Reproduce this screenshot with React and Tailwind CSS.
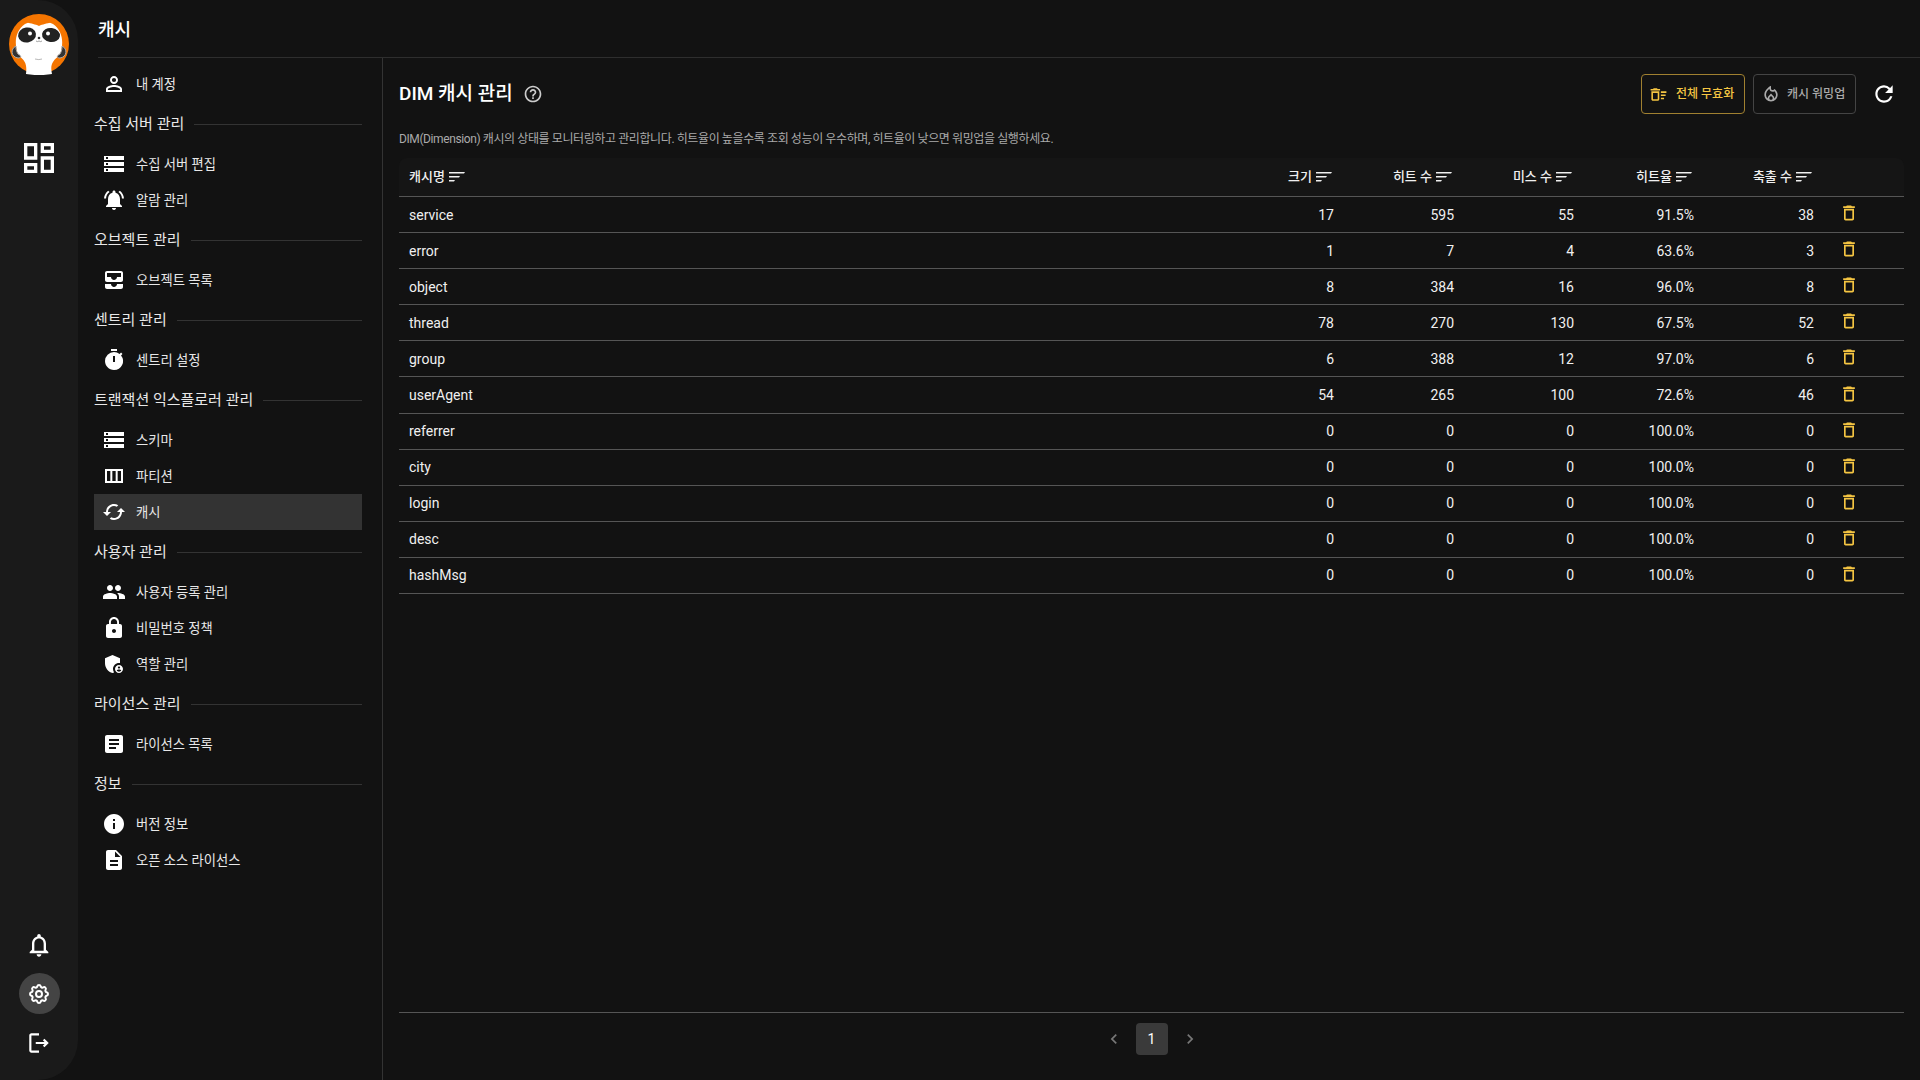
import React from 'react'
import {
  MdPersonOutline, MdStorage, MdNotificationsActive, MdAllInbox, MdTimer, MdOutlineViewColumn, MdCached,
  MdPeople, MdLock, MdAdminPanelSettings, MdArticle, MdInfo, MdDescription, MdOutlineDashboard,
  MdOutlineNotifications, MdOutlineLogout, MdRefresh, MdOutlineDelete, MdOutlineDeleteSweep,
  MdOutlineLocalFireDepartment, MdHelpOutline, MdChevronLeft, MdChevronRight,
} from 'react-icons/md'
import { TbSettings } from 'react-icons/tb'

const NAV = [
  { items: [{ icon: MdPersonOutline, label: '내 계정' }] },
  { title: '수집 서버 관리', items: [{ icon: MdStorage, label: '수집 서버 편집' }, { icon: MdNotificationsActive, label: '알람 관리' }] },
  { title: '오브젝트 관리', items: [{ icon: MdAllInbox, label: '오브젝트 목록' }] },
  { title: '센트리 관리', items: [{ icon: MdTimer, label: '센트리 설정' }] },
  {
    title: '트랜잭션 익스플로러 관리',
    items: [
      { icon: MdStorage, label: '스키마' },
      { icon: MdOutlineViewColumn, label: '파티션' },
      { icon: MdCached, label: '캐시', active: true },
    ],
  },
  {
    title: '사용자 관리',
    items: [
      { icon: MdPeople, label: '사용자 등록 관리' },
      { icon: MdLock, label: '비밀번호 정책' },
      { icon: MdAdminPanelSettings, label: '역할 관리' },
    ],
  },
  { title: '라이선스 관리', items: [{ icon: MdArticle, label: '라이선스 목록' }] },
  { title: '정보', items: [{ icon: MdInfo, label: '버전 정보' }, { icon: MdDescription, label: '오픈 소스 라이선스' }] },
]

const COLUMNS = ['크기', '히트 수', '미스 수', '히트율', '축출 수']

const ROWS = [
  ['service', '17', '595', '55', '91.5%', '38'],
  ['error', '1', '7', '4', '63.6%', '3'],
  ['object', '8', '384', '16', '96.0%', '8'],
  ['thread', '78', '270', '130', '67.5%', '52'],
  ['group', '6', '388', '12', '97.0%', '6'],
  ['userAgent', '54', '265', '100', '72.6%', '46'],
  ['referrer', '0', '0', '0', '100.0%', '0'],
  ['city', '0', '0', '0', '100.0%', '0'],
  ['login', '0', '0', '0', '100.0%', '0'],
  ['desc', '0', '0', '0', '100.0%', '0'],
  ['hashMsg', '0', '0', '0', '100.0%', '0'],
]

const SortIcon = () => (
  <svg width="16" height="12" viewBox="0 0 16 12" className="shrink-0 ml-1" fill="#f0f0f0">
    <path d="M0 1h16l-1 1.5H0z" />
    <path d="M0 5h11l-1 1.5H0z" />
    <path d="M0 9h6l-1 1.5H0z" />
  </svg>
)

// panda mascot, roughly traced from the reference
const Logo = () => (
  <svg width="62" height="62" viewBox="0 0 62 62">
    <circle cx="31" cy="31" r="30" fill="#f57500" />
    <path d="M18 61 C19 52 18 48 10 42 C6 30 7 18 17 11 C24 7 38 7 45 11 C55 18 56 30 52 42 C44 48 42 52 44 61 C36 62.5 26 62.5 18 61Z" fill="#ffffff" />
    <path d="M18 9 C24 5 38 5 44 9 C38 11 35 11 31 13 C27 11 24 11 18 9Z" fill="#f57500" />
    <ellipse cx="19" cy="22" rx="9" ry="7.5" fill="#222222" transform="rotate(-8 19 22)" />
    <ellipse cx="43" cy="22" rx="9" ry="7" fill="#222222" transform="rotate(8 43 22)" />
    <circle cx="22" cy="20.5" r="2" fill="#ffffff" />
    <circle cx="40" cy="20.5" r="2" fill="#ffffff" />
    <circle cx="31" cy="25" r="1.3" fill="#333333" />
    <path d="M28 28 q1.5 1.2 3 0 q1.5 1.2 3 0" stroke="#777777" strokeWidth="0.7" fill="none" />
    <path d="M27 46 q4 1.2 7 0" stroke="#999999" strokeWidth="0.7" fill="none" />
    <path d="M8 33 C2 36 3 44 10 45 C13 45 14 43 10 41 C8 38 8 35 8 33Z" fill="#333333" stroke="#aaaaaa" strokeWidth="1" />
    <path d="M54 33 C60 36 59 44 52 45 C49 45 48 43 52 41 C54 38 54 35 54 33Z" fill="#333333" stroke="#aaaaaa" strokeWidth="1" />
  </svg>
)

const Rail = () => (
  <aside className="w-[78px] h-full shrink-0 flex flex-col items-center bg-[#1a1a1a] rounded-r-[40px]">
    <div className="mt-[13px]">
      <Logo />
    </div>
    <MdOutlineDashboard size={40} className="mt-[63px] text-white" />
    <div className="mt-auto mb-[17px] flex flex-col items-center gap-[8px]">
      <div className="w-[41px] h-[41px] flex items-center justify-center">
        <MdOutlineNotifications size={28} className="text-white" />
      </div>
      <div className="w-[41px] h-[41px] flex items-center justify-center rounded-full bg-[#444444]">
        <TbSettings size={24} className="text-white" />
      </div>
      <div className="w-[41px] h-[41px] flex items-center justify-center">
        <MdOutlineLogout size={26} className="text-white" />
      </div>
    </div>
  </aside>
)

const Sidebar = () => (
  <nav className="w-[305px] shrink-0 border-r border-[#333333] pt-2 pl-4 pr-5">
    {NAV.map((group, i) => (
      <div key={i}>
        {group.title && (
          <div className="h-11 flex items-center gap-[10px]">
            <span className="text-[15px] text-[#e8e8e8] whitespace-nowrap">{group.title}</span>
            <div className="flex-1 h-px bg-[#333333]" />
          </div>
        )}
        {group.items.map((item) => {
          const Icon = item.icon
          return (
            <div key={item.label} className={`h-9 flex items-center gap-[10px] pl-2 ${item.active ? 'bg-[#333333]' : ''}`}>
              <Icon size={24} className="text-white shrink-0" />
              <span className="pt-px text-[13.3px] text-[#e8e8e8]">{item.label}</span>
            </div>
          )
        })}
      </div>
    ))}
  </nav>
)

const CacheTable = () => (
  <div className="flex-1 text-[14px]">
    <div className="h-[39px] grid grid-cols-[1fr_120px_120px_120px_120px_120px_80px] items-center bg-[#151515] rounded-t-lg border-b border-[#555555] font-medium text-[13px]">
      <div className="px-[10px] flex items-center">
        캐시명
        <SortIcon />
      </div>
      {COLUMNS.map((c) => (
        <div key={c} className="pl-[10px] pr-[12px] flex items-center justify-end">
          {c}
          <SortIcon />
        </div>
      ))}
      <div />
    </div>
    {ROWS.map((row) => (
      <div key={row[0]} className="h-[36.1px] pt-px grid grid-cols-[1fr_120px_120px_120px_120px_120px_80px] items-center border-b border-[#555555]">
        <div className="px-[10px]">{row[0]}</div>
        {row.slice(1).map((v, i) => (
          <div key={i} className="px-[10px] text-right">{v}</div>
        ))}
        <div className="pl-[15px] pb-[4px] flex">
          <MdOutlineDelete size={20} className="text-[#f5c542]" />
        </div>
      </div>
    ))}
  </div>
)

const App = () => (
  <div className="h-screen w-full flex overflow-hidden bg-[#121212] text-[#f0f0f0] font-['Roboto','Noto_Sans_CJK_KR',sans-serif]">
    <Rail />
    <div className="flex-1 flex flex-col min-w-0">
      <header className="h-[58px] ml-5 pt-px shrink-0 flex items-center border-b border-[#2e2e2e]">
        <h1 className="text-[18px] font-medium text-white">캐시</h1>
      </header>
      <div className="flex-1 flex min-h-0">
        <Sidebar />
        <main className="flex-1 min-w-0 flex flex-col px-4">
          <div className="h-10 mt-4 flex items-center">
            <h2 className="text-[19px] font-medium text-white">DIM 캐시 관리</h2>
            <MdHelpOutline size={20} className="ml-[10px] text-[#cccccc]" />
            <div className="ml-auto flex items-center">
              <button className="h-10 w-[104px] pl-[7px] flex items-center gap-2 rounded border border-[#a08030] text-[12px] font-medium text-[#f5c542]">
                <MdOutlineDeleteSweep size={19} />
                전체 무효화
              </button>
              <button className="h-10 w-[103px] ml-2 pl-[7px] flex items-center gap-[6px] rounded border border-[#444444] text-[12px] font-medium text-[#aaaaaa]">
                <MdOutlineLocalFireDepartment size={20} />
                캐시 워밍업
              </button>
              <MdRefresh size={26} className="ml-[15px] mr-[7px] text-white" />
            </div>
          </div>
          <p className="mt-[16px] mb-[10px] text-[12px] leading-[18px] tracking-[-0.4px] text-[#aaaaaa]">
            DIM(Dimension) 캐시의 상태를 모니터링하고 관리합니다. 히트율이 높을수록 조회 성능이 우수하며, 히트율이 낮으면 워밍업을 실행하세요.
          </p>
          <CacheTable />
          <div className="h-[68px] shrink-0 pt-[10px] flex items-start justify-center gap-[12px] border-t border-[#555555]">
            <MdChevronLeft size={20} className="mt-[6px] text-[#777777]" />
            <div className="w-8 h-8 flex items-center justify-center rounded bg-[#3a3a3a] text-[14px] text-white">1</div>
            <MdChevronRight size={20} className="mt-[6px] text-[#777777]" />
          </div>
        </main>
      </div>
    </div>
  </div>
)

export default App
